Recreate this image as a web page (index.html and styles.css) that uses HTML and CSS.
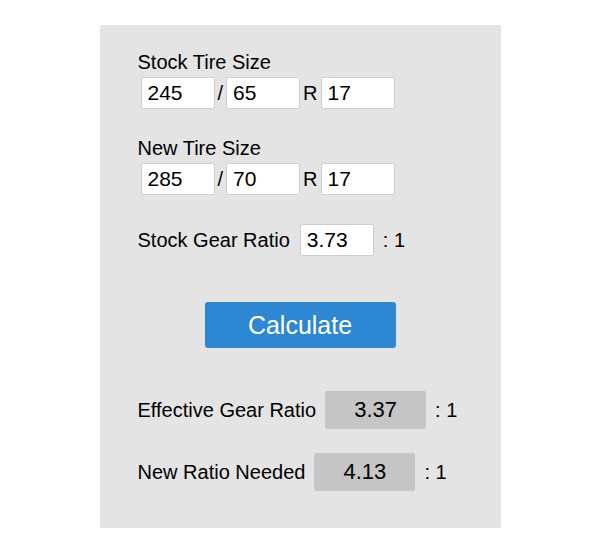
FILE: index.html
```html
<!DOCTYPE html>
<html lang="en">
<head>
    <meta charset="UTF-8">
    <meta name="viewport" content="width=device-width, initial-scale=1.0">
    <title>Gear Ratio Calculator</title>
    <link rel="stylesheet" href="styles.css">
</head>
<body>
    <div class="calculator">
        <div class="label">Stock Tire Size</div>
        <div class="tire-row">
            <input type="text" class="field" id="stockWidth" value="245">
            <span class="sep">/</span>
            <input type="text" class="field" id="stockAspect" value="65">
            <span class="sep">R</span>
            <input type="text" class="field" id="stockRim" value="17">
        </div>

        <div class="label label-new">New Tire Size</div>
        <div class="tire-row">
            <input type="text" class="field" id="newWidth" value="285">
            <span class="sep">/</span>
            <input type="text" class="field" id="newAspect" value="70">
            <span class="sep">R</span>
            <input type="text" class="field" id="newRim" value="17">
        </div>

        <div class="ratio-row gear-row">
            <span>Stock Gear Ratio</span>
            <input type="text" class="field" id="gearRatio" value="3.73">
            <span>: 1</span>
        </div>

        <div class="actions">
            <button type="button" class="btn" id="calculateButton">Calculate</button>
        </div>

        <div class="ratio-row result-row">
            <span>Effective Gear Ratio</span>
            <div class="output" id="effectiveRatio">3.37</div>
            <span>: 1</span>
        </div>

        <div class="ratio-row result-row result-last">
            <span>New Ratio Needed</span>
            <div class="output" id="neededRatio">4.13</div>
            <span>: 1</span>
        </div>
    </div>

    <script>
        const calculateButton = document.getElementById('calculateButton');

        function diameter(width, aspect, rim) {
            return (width * aspect / 100 * 2) / 25.4 + rim;
        }

        calculateButton.addEventListener('click', () => {
            const val = id => parseFloat(document.getElementById(id).value);
            const stock = diameter(val('stockWidth'), val('stockAspect'), val('stockRim'));
            const fresh = diameter(val('newWidth'), val('newAspect'), val('newRim'));
            const gear = val('gearRatio');

            if (!stock || !fresh || !gear) {
                return;
            }

            document.getElementById('effectiveRatio').textContent = (gear * stock / fresh).toFixed(2);
            document.getElementById('neededRatio').textContent = (gear * fresh / stock).toFixed(2);
        });
    </script>
</body>
</html>
```

FILE: styles.css
```css
body {
    font-family: "Liberation Sans", Arial, sans-serif;
    margin: 0;
    padding: 25px 0 0;
    background-color: #fff;
    color: #000;
}
.calculator {
    width: 401px;
    box-sizing: border-box;
    margin: 0 auto;
    padding: 25px 0 37px 38px;
    background-color: #e4e4e4;
    border-radius: 2px;
    font-size: 20px;
}
.label {
    line-height: 24px;
}
.label-new {
    margin-top: 27px;
}
.tire-row {
    display: flex;
    align-items: center;
    gap: 3px;
    margin: 3px 0 0 3px;
}
.field {
    width: 74px;
    height: 32px;
    box-sizing: border-box;
    padding: 0 6px;
    border: 1px solid #cfcfcf;
    border-radius: 2px;
    background-color: #fff;
    font-family: inherit;
    font-size: 21px;
    color: #000;
}
.ratio-row {
    display: flex;
    align-items: center;
    gap: 9px;
}
.gear-row {
    margin-top: 29px;
}
.gear-row .field {
    margin-left: 1px;
}
.actions {
    text-align: center;
    margin: 46px 38px 0 0;
}
.btn {
    width: 191px;
    height: 46px;
    border: none;
    border-radius: 3px;
    background-color: #2e87d2;
    color: #fff;
    font-family: inherit;
    font-size: 25px;
    cursor: pointer;
}
.result-row {
    margin-top: 43px;
}
.result-last {
    margin-top: 24px;
}
.output {
    width: 101px;
    height: 38px;
    line-height: 38px;
    text-align: center;
    background-color: #c5c5c5;
    border-radius: 2px;
    font-size: 22px;
}
```
